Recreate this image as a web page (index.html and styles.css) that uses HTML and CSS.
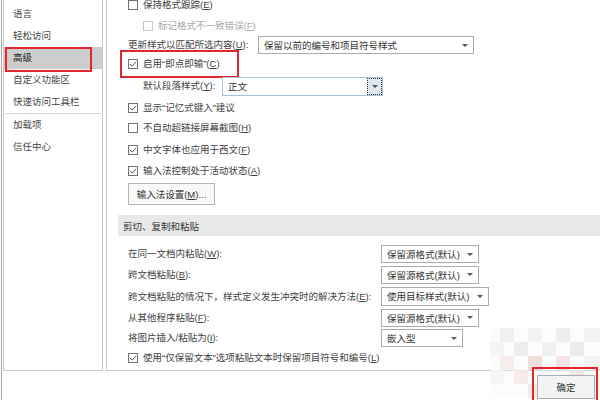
FILE: index.html
```html
<!DOCTYPE html>
<html lang="zh-CN">
<head>
<meta charset="utf-8">
<link rel="stylesheet" href="styles.css">
</head>
<body>
<div class="window">
  <div class="main">
    <div class="sidebar">
      <div class="nav-item">语言</div>
      <div class="nav-item">轻松访问</div>
      <div class="nav-item selected">高级<span class="mark mark-nav"></span></div>
      <div class="nav-item">自定义功能区</div>
      <div class="nav-item">快速访问工具栏</div>
      <div class="nav-sep"></div>
      <div class="nav-item">加载项</div>
      <div class="nav-item">信任中心</div>
    </div>
    <div class="content">
      <div class="row r1"><span class="cb"></span><span class="lbl">保持格式跟踪(<u>E</u>)</span></div>
      <div class="row r2 indent"><span class="cb disabled"></span><span class="lbl muted">标记格式不一致错误(<u>F</u>)</span></div>
      <div class="row r3"><span class="lbl w-update">更新样式以匹配所选内容(<u>U</u>):</span>
        <div class="dd dd-update"><span>保留以前的编号和项目符号样式</span><i class="arrow"></i></div></div>
      <div class="row r4"><span class="cb on"><svg viewBox="0 0 8 8"><polyline points="1,4 3.2,6.2 7,1.8"/></svg></span><span class="lbl">启用“即点即输”(<u>C</u>)</span><span class="mark mark-click"></span></div>
      <div class="row r5 indent2"><span class="lbl w-default">默认段落样式(<u>Y</u>):</span>
        <div class="combo"><span class="combo-text">正文</span><span class="combo-btn"><i class="arrow"></i></span></div></div>
      <div class="row r6"><span class="cb on"><svg viewBox="0 0 8 8"><polyline points="1,4 3.2,6.2 7,1.8"/></svg></span><span class="lbl">显示“记忆式键入”建议</span></div>
      <div class="row r7"><span class="cb"></span><span class="lbl">不自动超链接屏幕截图(<u>H</u>)</span></div>
      <div class="row r8"><span class="cb on"><svg viewBox="0 0 8 8"><polyline points="1,4 3.2,6.2 7,1.8"/></svg></span><span class="lbl">中文字体也应用于西文(<u>F</u>)</span></div>
      <div class="row r9"><span class="cb on"><svg viewBox="0 0 8 8"><polyline points="1,4 3.2,6.2 7,1.8"/></svg></span><span class="lbl">输入法控制处于活动状态(<u>A</u>)</span></div>
      <div class="btn-row"><button class="btn">输入法设置(<u>M</u>)...</button></div>
      <div class="section">剪切、复制和粘贴</div>
      <div class="paste">
        <div class="prow p1"><span class="lbl">在同一文档内粘贴(<u>W</u>):</span><div class="dd dd-src"><span>保留源格式(默认)</span><i class="arrow"></i></div></div>
        <div class="prow p2"><span class="lbl">跨文档粘贴(<u>B</u>):</span><div class="dd dd-src"><span>保留源格式(默认)</span><i class="arrow"></i></div></div>
        <div class="prow p3"><span class="lbl">跨文档粘贴的情况下，样式定义发生冲突时的解决方法(<u>E</u>):</span><div class="dd dd-target"><span>使用目标样式(默认)</span><i class="arrow"></i></div></div>
        <div class="prow p4"><span class="lbl">从其他程序粘贴(<u>F</u>):</span><div class="dd dd-src"><span>保留源格式(默认)</span><i class="arrow"></i></div></div>
        <div class="prow p5"><span class="lbl">将图片插入/粘贴为(<u>I</u>):</span><div class="dd dd-embed"><span>嵌入型</span><i class="arrow"></i></div></div>
      </div>
      <div class="row p6"><span class="cb on"><svg viewBox="0 0 8 8"><polyline points="1,4 3.2,6.2 7,1.8"/></svg></span><span class="lbl">使用“仅保留文本”选项粘贴文本时保留项目符号和编号(<u>L</u>)</span></div>
    </div>
  </div>
  <svg class="mosaic" width="110" height="70" viewBox="0 0 110 70">
    <rect x="0" y="0" width="110" height="70" fill="#fafafa" opacity="0.5"/>
    <rect x="10" y="0" width="14" height="14" fill="#eeeeee"/>
    <rect x="38" y="0" width="14" height="14" fill="#f2f2f2"/>
    <rect x="66" y="0" width="14" height="14" fill="#ececec"/>
    <rect x="94" y="0" width="16" height="14" fill="#f0f0f0"/>
    <rect x="0" y="14" width="14" height="14" fill="#f3f3f3"/>
    <rect x="24" y="14" width="14" height="14" fill="#ebebeb"/>
    <rect x="52" y="14" width="14" height="14" fill="#efefef"/>
    <rect x="80" y="14" width="14" height="14" fill="#e9e9e9"/>
    <rect x="10" y="28" width="14" height="14" fill="#f6eaea"/>
    <rect x="38" y="28" width="14" height="14" fill="#f1d9d9"/>
    <rect x="66" y="28" width="14" height="14" fill="#f4dede"/>
    <rect x="94" y="28" width="16" height="14" fill="#f0f0f0"/>
    <rect x="0" y="42" width="14" height="14" fill="#f5f5f5"/>
    <rect x="24" y="42" width="14" height="14" fill="#f7e8e8"/>
    <rect x="80" y="42" width="14" height="14" fill="#f5e4e4"/>
    <rect x="38" y="56" width="14" height="14" fill="#f5e6e6"/>
    <rect x="66" y="56" width="14" height="14" fill="#f1f1f1"/>
  </svg>
  <div class="footer">
    <div class="ok-wrap"><button class="btn ok">确定</button><span class="mark mark-ok"></span></div>
  </div>
</div>
</body>
</html>
```

FILE: styles.css
```css
* { box-sizing: border-box; }
html, body { margin: 0; padding: 0; background: #fff; }
body {
  width: 600px;
  height: 400px;
  overflow: hidden;
  font-family: "Liberation Sans", "Noto Sans CJK SC", sans-serif;
  font-size: 9.5px;
  color: #3f3f3f;
}
u { text-decoration: underline; text-underline-offset: 1px; }

.window {
  position: relative;
  height: 400px;
  margin-left: 1px;
  border-left: 1px solid #a6a6a6;
  padding-left: 1px;
}
.main {
  display: flex;
  height: 371px;
}

/* sidebar */
.sidebar {
  width: 100px;
  flex: none;
  border: 1px solid #c8c8c8;
  border-top: none;
  padding-top: 3px;
}
.nav-item {
  position: relative;
  height: 22px;
  line-height: 22px;
  padding-left: 9px;
  color: #444;
  white-space: nowrap;
}
.nav-item.selected { background: #cdcdcd; color: #222; }
.nav-sep {
  height: 1px;
  background: #d4d4d4;
  margin: 0 1px 0 1px;
}

/* annotation boxes */
.mark {
  position: absolute;
  border: 2px solid #e3262c;
  pointer-events: none;
}
.mark-nav { left: 1px; top: 0px; width: 87px; height: 25px; }
.mark-click { left: -8px; top: -4px; width: 119px; height: 28px; }
.mark-ok { left: -5px; top: -8px; width: 66px; height: 40px; }

/* content */
.content {
  flex: 1;
  margin-left: 3px;
  border-left: 1px solid #c8c8c8;
  border-bottom: 1px solid #c8c8c8;
  padding-left: 21px;
  display: flex;
  flex-direction: column;
  min-width: 0;
}
.row {
  position: relative;
  display: flex;
  align-items: center;
  white-space: nowrap;
}
.r1 { height: 21px; margin-top: -6px; }
.r2 { height: 21px; }
.r3 { height: 18px; }
.r4 { height: 20px; }
.r5 { height: 24px; }
.r6 { height: 19px; }
.r7 { height: 21px; }
.r8 { height: 23px; }
.r9 { height: 20px; }
.p6 { height: 20px; }
.indent { padding-left: 15px; }
.indent2 { padding-left: 15px; }

.cb {
  width: 10px;
  height: 10px;
  border: 1px solid #707070;
  background: #fff;
  flex: none;
  margin-right: 5px;
  display: inline-flex;
}
.cb svg { width: 8px; height: 8px; }
.cb polyline { fill: none; stroke: #555; stroke-width: 1; }
.cb.disabled { border-color: #c8c8c8; }
.lbl { line-height: 14px; }
.muted { color: #a8a8a8; }

.w-update { width: 130px; }
.w-default { width: 79px; }

.dd {
  height: 18px;
  border: 1px solid #ababab;
  background: #fff;
  display: flex;
  align-items: center;
  justify-content: space-between;
  padding: 0 5px 0 5px;
  color: #333;
  flex: none;
}
.arrow {
  display: block;
  width: 0;
  height: 0;
  border-left: 3px solid transparent;
  border-right: 3px solid transparent;
  border-top: 3px solid #555;
}
.dd-update { width: 216px; }
.dd-src { width: 98px; }
.dd-target { width: 108px; }
.dd-embed { width: 82px; }

.combo {
  width: 161px;
  height: 19px;
  border: 1px solid #a9c2de;
  display: flex;
  align-items: center;
  justify-content: space-between;
  background: #fff;
}
.combo-text { padding-left: 5px; color: #333; }
.combo-btn {
  width: 15px;
  height: 17px;
  border: 1px dotted #333;
  background: #dfe6ee;
  display: flex;
  align-items: center;
  justify-content: center;
}

.btn-row { margin-top: 2px; height: 22px; display: flex; }
.btn {
  font: inherit;
  color: #333;
  background: #f9f9f9;
  border: 1px solid #b4b4b4;
  border-radius: 0;
  padding: 0;
  margin: 0;
  width: 87px;
  height: 22px;
}

.section {
  margin-top: 10px;
  margin-left: -10px;
  height: 21px;
  background: #e8e8e8;
  padding-left: 5px;
  display: flex;
  align-items: center;
  color: #333;
}

.paste {
  display: grid;
  grid-template-columns: 253px auto;
  margin-top: 8px;
}
.prow { display: contents; }
.prow > .lbl, .prow > .dd { align-self: center; }
.prow > .lbl { white-space: nowrap; display: flex; align-items: center; }
.paste .lbl { height: 20px; }
.paste .p2 .lbl { margin-top: 1px; }
.paste .p3 .lbl { height: 21px; margin-top: 1px; }
.paste .p4 .lbl { margin-top: 1px; }
.paste .p3 .dd { height: 19px; }

/* footer */
.footer {
  position: relative;
  z-index: 2;
  display: flex;
  justify-content: flex-end;
  padding-top: 4px;
  padding-right: 5px;
}
.ok-wrap { position: relative; }
.btn.ok { width: 58px; height: 24px; background: #f3f3f3; border-color: #adadad; }

.mosaic {
  position: absolute;
  right: 0;
  top: 328px;
  opacity: 0.85;
  z-index: 1;
}
```
